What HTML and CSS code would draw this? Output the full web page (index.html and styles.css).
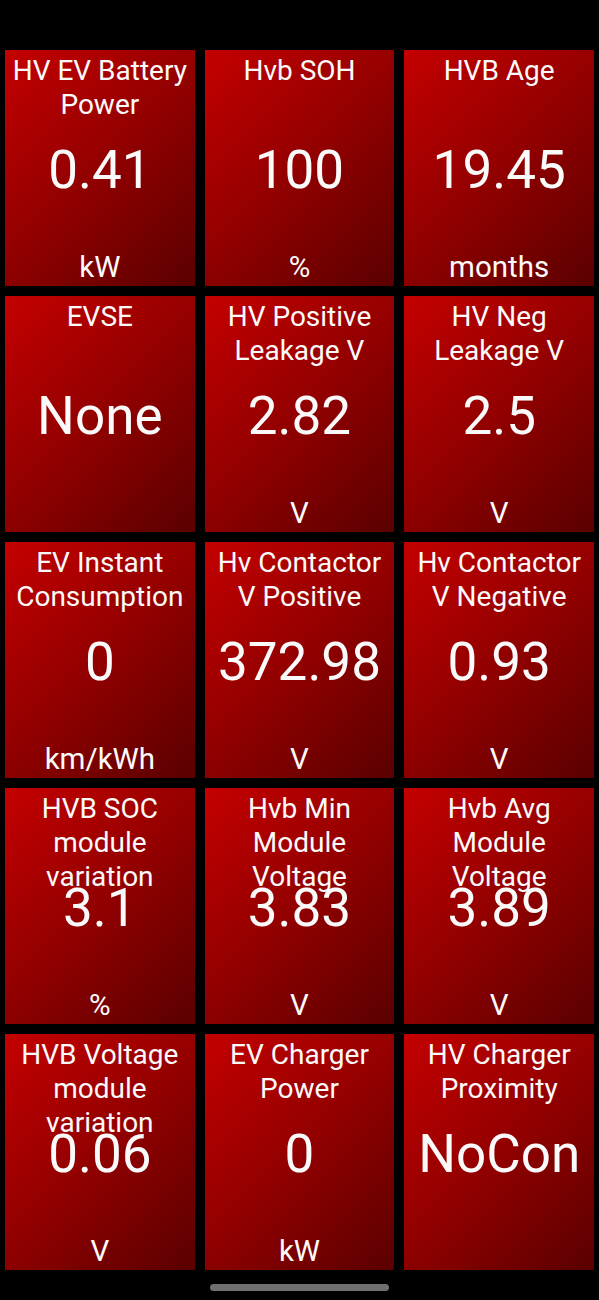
FILE: index.html
```html
<!DOCTYPE html>
<html>
<head>
<meta charset="utf-8">
<link rel="stylesheet" href="styles.css">
</head>
<body>
<div class="screen">
  <div class="grid">
    <div class="tile"><div class="title">HV EV Battery Power</div><div class="value">0.41</div><div class="unit">kW</div></div>
    <div class="tile"><div class="title">Hvb SOH</div><div class="value">100</div><div class="unit">%</div></div>
    <div class="tile"><div class="title">HVB Age</div><div class="value">19.45</div><div class="unit">months</div></div>

    <div class="tile"><div class="title">EVSE</div><div class="value">None</div><div class="unit"></div></div>
    <div class="tile"><div class="title">HV Positive Leakage V</div><div class="value">2.82</div><div class="unit">V</div></div>
    <div class="tile"><div class="title">HV Neg Leakage V</div><div class="value">2.5</div><div class="unit">V</div></div>

    <div class="tile"><div class="title">EV Instant Consumption</div><div class="value">0</div><div class="unit">km/kWh</div></div>
    <div class="tile"><div class="title">Hv Contactor V Positive</div><div class="value">372.98</div><div class="unit">V</div></div>
    <div class="tile"><div class="title">Hv Contactor V Negative</div><div class="value">0.93</div><div class="unit">V</div></div>

    <div class="tile"><div class="title">HVB SOC module variation</div><div class="value">3.1</div><div class="unit">%</div></div>
    <div class="tile"><div class="title">Hvb Min Module Voltage</div><div class="value">3.83</div><div class="unit">V</div></div>
    <div class="tile"><div class="title">Hvb Avg Module Voltage</div><div class="value">3.89</div><div class="unit">V</div></div>

    <div class="tile"><div class="title">HVB Voltage module variation</div><div class="value">0.06</div><div class="unit">V</div></div>
    <div class="tile"><div class="title">EV Charger Power</div><div class="value">0</div><div class="unit">kW</div></div>
    <div class="tile"><div class="title">HV Charger Proximity</div><div class="value">NoCon</div><div class="unit"></div></div>
  </div>
  <div class="home-bar"></div>
</div>
</body>
</html>
```

FILE: styles.css
```css
html, body {
  margin: 0;
  padding: 0;
  background: #000;
}
body {
  font-family: Roboto, "Noto Sans", sans-serif;
  color: #fafafa;
}
.screen {
  width: 599px;
  height: 1300px;
  background: #000;
  display: flex;
  flex-direction: column;
  align-items: center;
}
.grid {
  margin-top: 50px;
  width: 589px;
  display: grid;
  grid-template-columns: repeat(3, 1fr);
  grid-auto-rows: 236px;
  column-gap: 10px;
  row-gap: 10px;
}
.tile {
  display: grid;
  grid-template-rows: 1fr;
  grid-template-columns: 1fr;
  background: linear-gradient(135deg, #c40000 0%, #920000 50%, #5a0000 100%);
  overflow: hidden;
  text-align: center;
}
.tile > div {
  grid-row: 1;
  grid-column: 1;
}
.title {
  align-self: start;
  font-size: 28px;
  line-height: 34px;
  padding: 4px 2px 0;
}
.value {
  align-self: center;
  font-size: 53px;
  line-height: 62px;
  padding-top: 3px;
  white-space: nowrap;
}
.unit {
  align-self: end;
  font-size: 29.5px;
  line-height: 34px;
  padding-bottom: 2px;
}
.home-bar {
  margin-top: 14px;
  width: 179px;
  height: 7px;
  border-radius: 4px;
  background: #6e6e6e;
}
```
